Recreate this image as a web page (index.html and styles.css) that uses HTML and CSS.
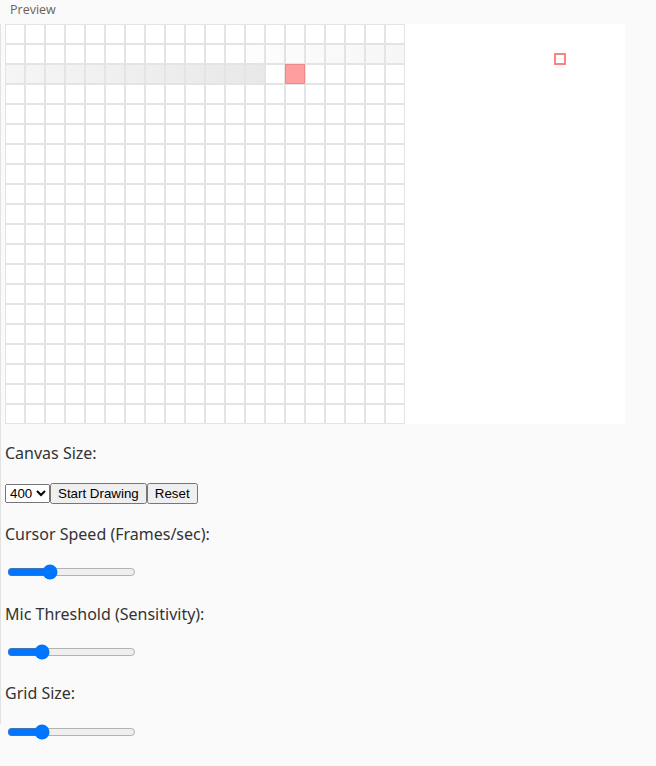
FILE: index.html
```html
<!DOCTYPE html>
<html lang="en">
<head>
<meta charset="utf-8">
<title>Preview</title>
<link rel="stylesheet" href="styles.css">
</head>
<body>
<div class="header">Preview</div>
<div class="app">
  <div class="stage">
    <div class="grid">
      <div class="trail trail-a"></div>
      <div class="trail trail-b"></div>
      <div class="cell-active"></div>
    </div>
    <div class="preview-pane">
      <div class="cursor"></div>
    </div>
  </div>

  <p class="label label-canvas">Canvas Size:</p>
  <div class="row">
    <select class="select">
      <option>400</option>
      <option>600</option>
      <option>800</option>
    </select>
    <button class="btn">Start Drawing</button>
    <button class="btn">Reset</button>
  </div>

  <p class="label label-speed">Cursor Speed (Frames/sec):</p>
  <input type="range" class="slider slider-speed" min="1" max="30" value="10">

  <p class="label label-mic">Mic Threshold (Sensitivity):</p>
  <input type="range" class="slider slider-mic" min="0" max="100" value="24">

  <p class="label label-grid">Grid Size:</p>
  <input type="range" class="slider slider-grid" min="0" max="100" value="24">
</div>
</body>
</html>
```

FILE: styles.css
```css
html, body {
  margin: 0;
  padding: 0;
  background: #fafafa;
}

body {
  width: 656px;
  height: 766px;
  overflow: hidden;
  font-family: "Noto Sans", "Open Sans", sans-serif;
  color: #333;
}

.header {
  height: 24px;
  line-height: 20px;
  padding-left: 10px;
  font-family: "Open Sans", "Lato", sans-serif;
  font-size: 12.5px;
  color: #6b6358;
}

.app {
  border-left: 1px solid #e2e2e2;
  padding-left: 4px;
  height: 700px;
  display: flex;
  flex-direction: column;
  align-items: flex-start;
}

.stage {
  display: flex;
  width: 620px;
  height: 400px;
  background: #fff;
}

.grid {
  position: relative;
  width: 400px;
  height: 400px;
  display: grid;
  grid-template-columns: repeat(20, 20px);
  grid-template-rows: repeat(20, 20px);
  background: #fff;
}

.grid::after {
  content: "";
  position: absolute;
  inset: 0;
  z-index: 1;
  pointer-events: none;
  background-image:
    linear-gradient(to right, #e4e4e4 1px, transparent 1px, transparent 19px, #e4e4e4 19px),
    linear-gradient(to bottom, #e4e4e4 1px, transparent 1px, transparent 19px, #e4e4e4 19px);
  background-size: 20px 20px;
}

.trail {
  z-index: 0;
}

.trail-a {
  grid-row: 2;
  grid-column: 13 / 21;
  background: linear-gradient(to right, rgba(0, 0, 0, 0.008), rgba(0, 0, 0, 0.035));
}

.trail-b {
  grid-row: 3;
  grid-column: 1 / 14;
  background: linear-gradient(to right, rgba(0, 0, 0, 0.04), rgba(0, 0, 0, 0.09));
}

.cell-active {
  grid-row: 3;
  grid-column: 15;
  position: relative;
  z-index: 2;
  box-sizing: border-box;
  background: #ff9e9e;
  border: 1px solid #f08a8a;
}

.preview-pane {
  position: relative;
  width: 220px;
  height: 400px;
  background: #fff;
}

.cursor {
  position: absolute;
  left: 149px;
  top: 29px;
  width: 12px;
  height: 12px;
  box-sizing: border-box;
  border: 2px solid #ff8080;
}

.label {
  margin: 0;
  font-size: 16px;
  line-height: 22px;
  color: #333;
}

.label-canvas { margin-top: 18px; }
.label-speed { margin-top: 19px; }
.label-mic { margin-top: 23px; }
.label-grid { margin-top: 22px; }

.row {
  display: flex;
  align-items: center;
  margin-top: 19px;
  height: 21px;
}

.select,
.btn {
  font-family: "Liberation Sans", Arial, sans-serif;
  font-size: 13.333px;
  margin: 0;
}

.select {
  width: 45px;
  height: 19px;
}

.btn {
  padding: 1px 6px;
  min-width: 51px;
}

.btn + .btn {
  margin-left: 0;
}

.slider {
  display: block;
  width: 129px;
  height: 16px;
  margin: 0 2px;
  accent-color: #0075ff;
}

.slider-speed { margin-top: 19px; }
.slider-mic { margin-top: 19px; }
.slider-grid { margin-top: 20px; }
```
